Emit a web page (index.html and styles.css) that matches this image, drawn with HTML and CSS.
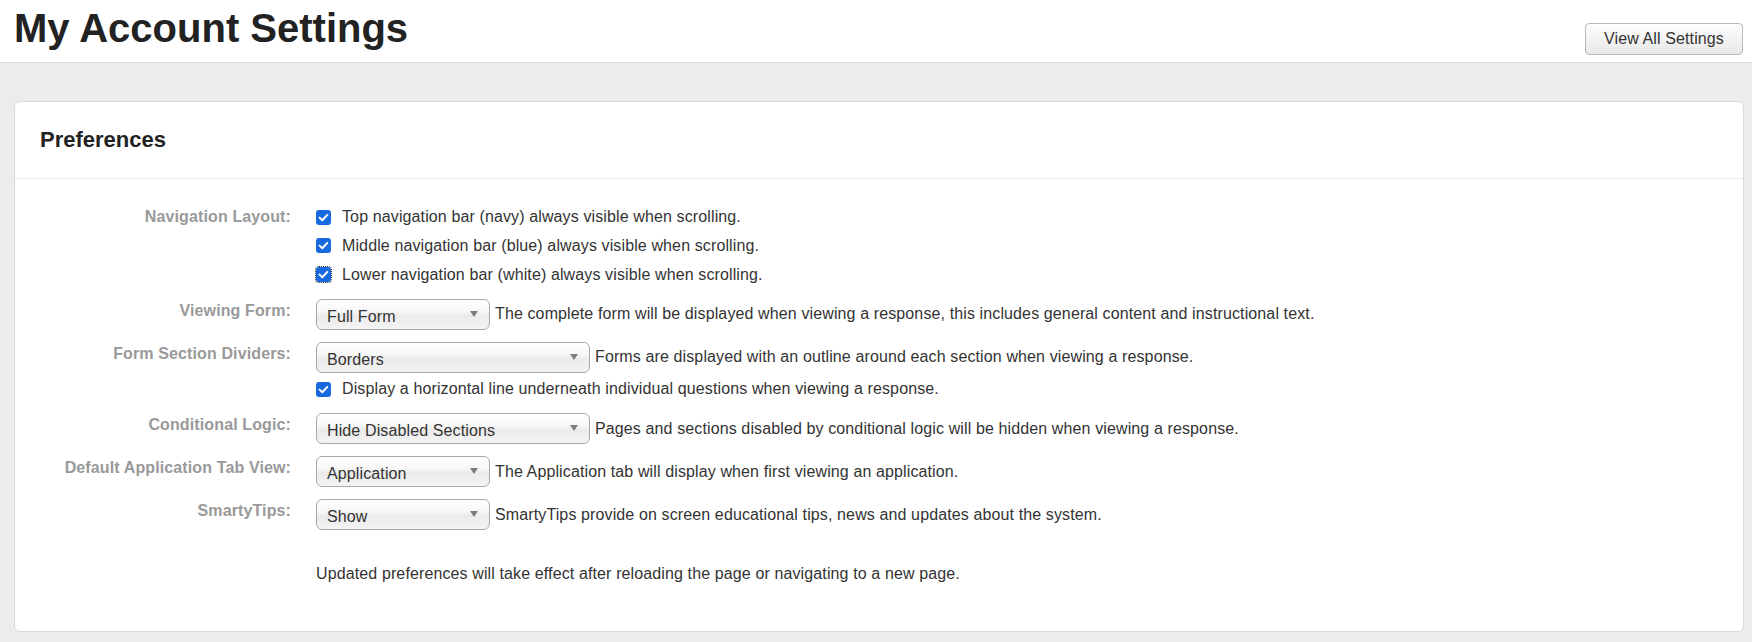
FILE: index.html
```html
<!DOCTYPE html>
<html lang="en">
<head>
<meta charset="utf-8">
<title>My Account Settings</title>
<link rel="stylesheet" href="styles.css">
</head>
<body>
<header class="page-header">
  <h1 class="page-title">My Account Settings</h1>
  <button class="btn" type="button">View All Settings</button>
</header>
<main class="main">
  <section class="card">
    <div class="card-header">
      <h2 class="card-title">Preferences</h2>
    </div>
    <div class="card-body">
      <div class="form">
        <div class="row">
          <div class="label">Navigation Layout:</div>
          <div class="controls">
            <label class="check-line"><span class="check"><svg viewBox="0 0 15 15" width="15" height="15"><path d="M3.6 7.6 L6.3 10.2 L11.4 4.9" fill="none" stroke="#fff" stroke-width="2" stroke-linecap="round" stroke-linejoin="round"/></svg></span>Top navigation bar (navy) always visible when scrolling.</label>
            <label class="check-line"><span class="check"><svg viewBox="0 0 15 15" width="15" height="15"><path d="M3.6 7.6 L6.3 10.2 L11.4 4.9" fill="none" stroke="#fff" stroke-width="2" stroke-linecap="round" stroke-linejoin="round"/></svg></span>Middle navigation bar (blue) always visible when scrolling.</label>
            <label class="check-line"><span class="check focused"><svg viewBox="0 0 15 15" width="15" height="15"><path d="M3.6 7.6 L6.3 10.2 L11.4 4.9" fill="none" stroke="#fff" stroke-width="2" stroke-linecap="round" stroke-linejoin="round"/></svg></span>Lower navigation bar (white) always visible when scrolling.</label>
          </div>
        </div>
        <div class="row">
          <div class="label">Viewing Form:</div>
          <div class="controls">
            <div class="select-line">
              <span class="select-wrap"><select class="select select-sm"><option>Full Form</option></select></span>
              <span class="desc">The complete form will be displayed when viewing a response, this includes general content and instructional text.</span>
            </div>
          </div>
        </div>
        <div class="row">
          <div class="label">Form Section Dividers:</div>
          <div class="controls">
            <div class="select-line">
              <span class="select-wrap"><select class="select select-lg"><option>Borders</option></select></span>
              <span class="desc">Forms are displayed with an outline around each section when viewing a response.</span>
            </div>
            <label class="check-line"><span class="check"><svg viewBox="0 0 15 15" width="15" height="15"><path d="M3.6 7.6 L6.3 10.2 L11.4 4.9" fill="none" stroke="#fff" stroke-width="2" stroke-linecap="round" stroke-linejoin="round"/></svg></span>Display a horizontal line underneath individual questions when viewing a response.</label>
          </div>
        </div>
        <div class="row">
          <div class="label">Conditional Logic:</div>
          <div class="controls">
            <div class="select-line">
              <span class="select-wrap"><select class="select select-lg"><option>Hide Disabled Sections</option></select></span>
              <span class="desc">Pages and sections disabled by conditional logic will be hidden when viewing a response.</span>
            </div>
          </div>
        </div>
        <div class="row">
          <div class="label">Default Application Tab View:</div>
          <div class="controls">
            <div class="select-line">
              <span class="select-wrap"><select class="select select-sm"><option>Application</option></select></span>
              <span class="desc">The Application tab will display when first viewing an application.</span>
            </div>
          </div>
        </div>
        <div class="row">
          <div class="label">SmartyTips:</div>
          <div class="controls">
            <div class="select-line">
              <span class="select-wrap"><select class="select select-sm"><option>Show</option></select></span>
              <span class="desc">SmartyTips provide on screen educational tips, news and updates about the system.</span>
            </div>
          </div>
        </div>
        <div class="row note-row">
          <div class="label"></div>
          <div class="controls">
            <p class="note">Updated preferences will take effect after reloading the page or navigating to a new page.</p>
          </div>
        </div>
      </div>
    </div>
  </section>
</main>
</body>
</html>
```

FILE: styles.css
```css
* { box-sizing: border-box; }

body {
  margin: 0;
  background: #ececec;
  font-family: "Liberation Sans", Arial, sans-serif;
  font-size: 16px;
  color: #333;
}

.page-header {
  background: #fff;
  border-bottom: 1px solid #dcdcdc;
  height: 63px;
  display: flex;
  justify-content: space-between;
  align-items: flex-start;
  padding: 0 9px 0 14px;
}

.page-title {
  margin: 0;
  padding-top: 5px;
  font-size: 40px;
  line-height: 47px;
  font-weight: bold;
  color: #222;
}

.btn {
  margin-top: 23px;
  height: 32px;
  padding: 0 18px;
  border: 1px solid #b9b9b9;
  border-radius: 4px;
  background: linear-gradient(#fdfdfd, #e8e8e8);
  font-family: "Liberation Sans", Arial, sans-serif;
  font-size: 16px;
  letter-spacing: 0.12px;
  color: #333;
}

.main {
  padding: 38px 8px 9px 14px;
}

.card {
  background: #fff;
  border: 1px solid #d9d9d9;
  border-radius: 6px;
}

.card-header {
  padding: 25px 25px;
  border-bottom: 1px dotted #dcdcdc;
}

.card-title {
  margin: 0;
  font-size: 22px;
  line-height: 26px;
  font-weight: bold;
  color: #222;
}

.card-body {
  padding: 26px 0 45px;
  letter-spacing: 0.12px;
}

.form {
  display: flex;
  flex-direction: column;
  gap: 12px;
}

.row {
  display: flex;
  gap: 25px;
}

.label {
  width: 276px;
  flex: none;
  text-align: right;
  font-weight: bold;
  color: #999;
  line-height: 24px;
}

.controls {
  display: flex;
  flex-direction: column;
  gap: 4.8px;
}

.check-line {
  display: flex;
  align-items: center;
  height: 24px;
  line-height: 24px;
}

.check {
  width: 15px;
  height: 15px;
  flex: none;
  margin-right: 11px;
  border-radius: 3px;
  background: #1669de;
  display: flex;
}

.check.focused {
  outline: 1px dotted #222;
  outline-offset: 0;
}

.select-line {
  display: flex;
  align-items: center;
  gap: 5px;
}

.desc {
  line-height: 24px;
}

.select-wrap {
  position: relative;
  display: block;
  flex: none;
}

.select-wrap::after {
  content: "";
  position: absolute;
  right: 12px;
  top: 12px;
  border-left: 4px solid transparent;
  border-right: 4px solid transparent;
  border-top: 6px solid #7c7c7c;
  pointer-events: none;
}

.select {
  appearance: none;
  -webkit-appearance: none;
  display: block;
  height: 31px;
  margin: 0;
  padding: 4px 26px 0 10px;
  border: 1px solid #a9a9a9;
  border-radius: 6px;
  background: linear-gradient(#ffffff 0%, #f7f7f7 40%, #ebebeb 55%, #f3f3f3 100%);
  font-family: "Liberation Sans", Arial, sans-serif;
  font-size: 16px;
  letter-spacing: 0.12px;
  color: #333;
}

.select-sm { width: 174px; }
.select-lg { width: 274px; }

.note-row {
  margin-top: 20px;
}

.note {
  margin: 0;
  line-height: 24px;
}
```
